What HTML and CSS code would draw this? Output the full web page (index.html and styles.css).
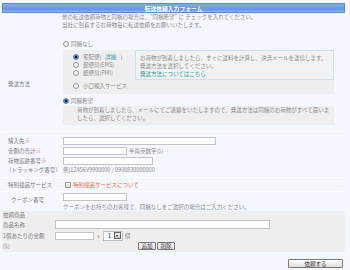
FILE: index.html
```html
<!DOCTYPE html>
<html lang="ja">
<head>
<meta charset="utf-8">
<link rel="stylesheet" href="styles.css">
</head>
<body>
<div class="page">
  <div class="title">転送依頼入力フォーム</div>
  <div class="intro">他の転送依頼荷物と同梱の場合は、"同梱希望" に チェックを入れてください。<br>当社に到着するお荷物毎に転送依頼をお願いいたします。</div>

  <div class="row ship">
    <div class="label ship-label">発送方法</div>
    <div class="field">
      <div class="opt"><span class="radio"></span>同梱なし</div>
      <div class="methods">
        <div class="method-list">
          <div class="opt wide"><span class="radio on"></span>宅配便(<span class="link">詳細</span>)</div>
          <div class="opt wide"><span class="radio"></span>郵便局(EMS)</div>
          <div class="opt wide"><span class="radio"></span>郵便局(PMI)</div>
          <div class="opt wide small-pkg"><span class="radio"></span>小口輸入サービス</div>
        </div>
        <div class="notice">お荷物が到着しましたら、すぐに送料を計算し、決済メールを送信します。<br>発送方法を選択してください。<br><span class="link">発送方法についてはこちら</span></div>
      </div>
      <div class="opt combine"><span class="radio on"></span>同梱希望</div>
      <div class="combine-note">荷物が到着しましたら、メールにてご連絡をいたしますので、発送方法は同梱のお荷物がすべて届いま<br>したら、選択してください。</div>
    </div>
  </div>

  <div class="details">
    <div class="frow"><div class="label">購入先<span class="req">※</span></div><input class="inp long" type="text"></div>
    <div class="frow"><div class="label">金額の合計<span class="req">※</span></div><input class="inp mid" type="text"><span class="hint">半角英数字($)</span></div>
    <div class="frow"><div class="label">荷物追跡番号<span class="req">※</span></div><input class="inp track" type="text"></div>
    <div class="frow text"><div class="label tight">（トラッキング番号）</div><span>例)1Z456V9900000 / 0900830000000</span></div>
  </div>

  <div class="frow special">
    <div class="label">特別検品サービス</div>
    <span class="check"></span><span class="orange">特別検品サービスについて</span>
  </div>

  <div class="coupon">
    <div class="label coupon-label">クーポン番号</div>
    <div class="coupon-field">
      <input class="inp mid" type="text">
      <div class="coupon-note">クーポンをお持ちのお客様で、同梱なしをご選択の場合はご入力ください。</div>
    </div>
  </div>

  <div class="items">
    <div class="items-title">依頼商品</div>
    <div class="irow"><div class="ilabel">商品名称</div><input class="inp name" type="text"></div>
    <div class="irow"><div class="ilabel">1個あたりの金額</div><input class="inp price" type="text"><span class="times">x</span><div class="select"><span class="sel-val">1</span><span class="sel-arrow"></span></div><span class="unit">個</span></div>
    <div class="irow"><div class="ilabel">($)</div><div class="btns"><button class="btn">追加</button><button class="btn">削除</button></div></div>
  </div>

  <div class="submit-row"><button class="btn submit">依頼する</button></div>
</div>
</body>
</html>
```

FILE: styles.css
```css
html, body {
  margin: 0;
  background: #f4f7fd;
}
body {
  font-family: "Noto Sans CJK JP", "Noto Sans", sans-serif;
  font-size: 5.5px;
  line-height: 8px;
  color: #8c8c8c;
}
.page {
  padding: 3px 5px 0 2px;
}
.title {
  height: 10px;
  line-height: 9px;
  box-sizing: border-box;
  background: linear-gradient(#7fabef, #6596e4 70%, #8db6f2);
  border: 1px solid #5a89d6;
  color: #fff;
  font-weight: bold;
  font-size: 5.8px;
  text-align: center;
}
.intro {
  padding-left: 60px;
  white-space: nowrap;
}
.row {
  display: flex;
  border-bottom: 1px solid #fff;
}
.label {
  width: 61px;
  flex: none;
  box-sizing: border-box;
  padding-left: 6px;
  color: #7d7d7d;
  white-space: nowrap;
}
.label.tight {
  padding-left: 4px;
}
.ship {
  padding: 11px 0 6px;
  align-items: center;
}
.ship-label {
  padding-top: 3px;
}
.field {
  flex: 1;
  padding-right: 11px;
}
.opt {
  display: flex;
  align-items: center;
  gap: 2px;
  height: 8px;
  white-space: nowrap;
}
.opt.wide {
  gap: 4px;
}
.radio {
  width: 6px;
  height: 6px;
  box-sizing: border-box;
  border-radius: 50%;
  border: 1px solid #9b9b9b;
  background: radial-gradient(circle, #ffffff 0, #dcdcdc 100%);
  flex: none;
}
.radio.on {
  border-color: #6f7f99;
  background: radial-gradient(circle, #0c1c3c 0 1.1px, #4f86d6 1.6px 2.1px, #d6d6d6 2.6px);
}
.link {
  color: #2e9ba3;
}
.methods {
  display: flex;
  align-items: flex-start;
  background: #eeeeee;
  margin-top: 2px;
}
.method-list {
  width: 72px;
  box-sizing: border-box;
  padding: 2.5px 0 4px 10px;
}
.small-pkg {
  margin-top: 5.5px;
}
.notice {
  flex: 1;
  border: 1px solid #c6e2f3;
  background: #f2f2f2;
  padding: 3px 4px 1px;
  white-space: nowrap;
}
.combine {
  margin-top: 3px;
}
.combine-note {
  margin-top: 1px;
  background: #eeeeee;
  padding: 0 0 3px 14px;
  white-space: nowrap;
}
.details {
  padding: 4px 0 3px;
  border-bottom: 1px solid #fff;
}
.frow {
  display: flex;
  align-items: center;
  height: 10px;
  white-space: nowrap;
}
.frow.text {
  height: 8px;
}
.req {
  color: #f07070;
}
.inp {
  box-sizing: border-box;
  height: 8px;
  margin: 0;
  padding: 0;
  border: 1px solid #c4c4c4;
  background: #fff;
  flex: none;
}
.inp.long { width: 153px; }
.inp.mid { width: 64px; }
.inp.track { width: 90px; }
.hint {
  margin-left: 2px;
}
.special {
  height: 13px;
  border-bottom: 1px solid #fff;
}
.check {
  width: 6px;
  height: 6px;
  box-sizing: border-box;
  border: 1px solid #9b9b9b;
  background: linear-gradient(#fff, #d8d8d8);
  margin: 0 2px 0 2px;
  flex: none;
}
.orange {
  color: #f26a3c;
}
.coupon {
  display: flex;
  align-items: flex-start;
  padding-top: 1px;
  height: 19px;
  box-sizing: border-box;
}
.coupon-label {
  padding-left: 9px;
  margin-top: 3px;
}
.coupon-field {
  display: flex;
  flex-direction: column;
  white-space: nowrap;
}
.coupon-note {
  margin-top: 2px;
}
.items {
  background: #eeeeee;
  padding-bottom: 1px;
}
.items-title {
  padding-left: 1px;
  color: #7d7d7d;
}
.irow {
  display: flex;
  align-items: center;
  height: 11px;
  white-space: nowrap;
}
.irow:last-child {
  height: 10px;
}
.ilabel {
  width: 53px;
  flex: none;
  box-sizing: border-box;
  padding-left: 1px;
  color: #7d7d7d;
}
.inp.name {
  width: 215px;
  height: 9px;
}
.inp.price {
  width: 39px;
}
.times {
  margin: 0 3px 0 3px;
}
.select {
  display: flex;
  align-items: center;
  width: 20px;
  height: 10px;
  box-sizing: border-box;
  border: 1px solid #bdbdbd;
  background: #fff;
}
.sel-val {
  flex: 1;
  color: #2c5fd4;
  font-weight: bold;
  padding-left: 4px;
}
.sel-arrow {
  width: 7px;
  height: 7px;
  margin-right: 1px;
  box-sizing: border-box;
  border: 1px solid #666;
  background: linear-gradient(#f4f4f4, #c9c9c9);
  position: relative;
}
.sel-arrow::after {
  content: "";
  position: absolute;
  left: 1px;
  top: 2px;
  border-left: 1.5px solid transparent;
  border-right: 1.5px solid transparent;
  border-top: 2px solid #222;
}
.unit {
  margin-left: 2px;
}
.btns {
  display: flex;
  gap: 1px;
  padding-left: 83px;
}
.btn {
  font-family: "Noto Sans CJK JP", "Noto Sans", sans-serif;
  font-size: 5.5px;
  line-height: 6px;
  height: 8px;
  width: 18px;
  padding: 0;
  margin: 0;
  box-sizing: border-box;
  border: 1px solid #7a7a7a;
  border-radius: 1px;
  background: linear-gradient(#ffffff, #dcdcdc);
  color: #333;
}
.submit-row {
  display: flex;
  justify-content: flex-end;
  padding: 7px 2px 0 0;
}
.btn.submit {
  width: 55px;
  height: 9px;
}
```
